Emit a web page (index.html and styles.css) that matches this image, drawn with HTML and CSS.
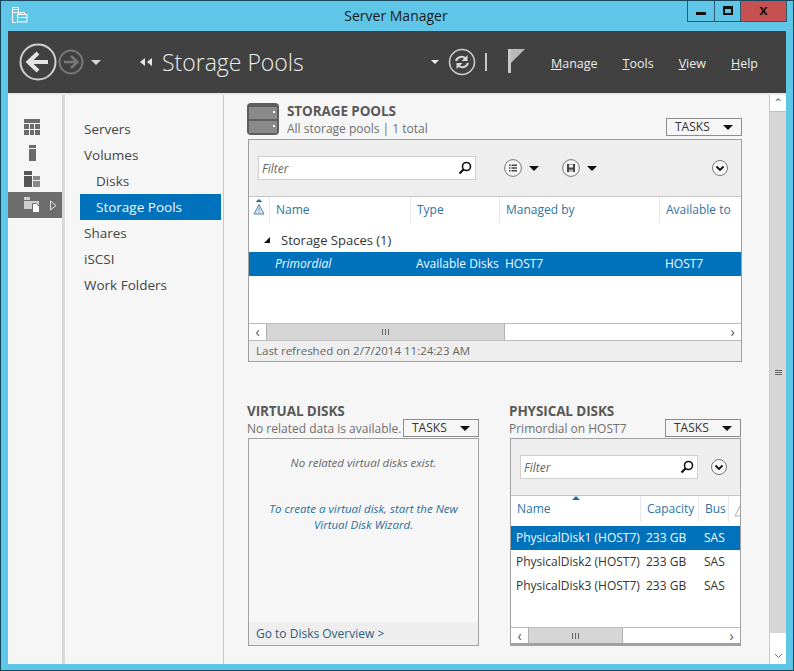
FILE: index.html
```html
<!DOCTYPE html>
<html lang="en">
<head>
<meta charset="utf-8">
<title>Server Manager</title>
<link rel="stylesheet" href="styles.css">
</head>
<body>
<div class="window">
  <div class="titlebar">
    <div class="app-icon">
      <svg width="17" height="17" viewBox="0 0 17 17"><path d="M1.5 1.5h6v5h-6zM1.5 6.5h6v4M1.5 6.500v10h4" fill="none" stroke="#fff"/><path d="M1 3.500h7" stroke="#fff"/><rect x="6.500" y="8.500" width="9.500" height="7.500" fill="#5fc6e8" stroke="#fff"/><path d="M9 8.500v-2h4.500v2M6.500 11.500h9.500" fill="none" stroke="#fff"/></svg>
    </div>
    <div class="title">Server Manager</div>
    <div class="winbtns">
      <div class="winbtn min"><span class="min-glyph"></span></div>
      <div class="winbtn max"><span class="max-glyph"></span></div>
      <div class="winbtn close">x</div>
    </div>
  </div>
  <div class="header">
    <svg class="back" width="38" height="38" viewBox="0 0 38 38"><circle cx="19" cy="19" r="17.500" fill="none" stroke="#d0d0d0" stroke-width="2"/><path d="M9 19h20M19 10l-9.500 9 9.500 9" fill="none" stroke="#e4e4e4" stroke-width="4"/></svg>
    <svg class="fwd" width="26" height="26" viewBox="0 0 26 26"><circle cx="13" cy="13" r="11.500" fill="none" stroke="#777" stroke-width="2"/><path d="M20 13H6M13 7l6.500 6-6.500 6" fill="none" stroke="#777" stroke-width="2.500"/></svg>
    <span class="caret hdr-caret1"></span>
    <span class="crumb-arrows"><i></i><i></i></span>
    <span class="crumb">Storage Pools</span>
    <span class="caret hdr-caret2"></span>
    <svg class="refresh" width="28" height="28" viewBox="0 0 28 28"><circle cx="14" cy="14" r="12.500" fill="none" stroke="#d0d0d0" stroke-width="1.500"/><path d="M8 13c1-4 7-6 10-2M20 15c-1 4-7 6-10 2" fill="none" stroke="#d8d8d8" stroke-width="2"/><path d="M19.500 7v6h-6zM8.500 21v-6h6z" fill="#d8d8d8"/></svg>
    <span class="hdr-sep"></span>
    <svg class="flag" width="18" height="24" viewBox="0 0 18 24"><rect x="0" y="0" width="3" height="24" fill="#c8c8c8"/><path d="M3 0h14L3 14z" fill="#b8b8b8"/></svg>
    <nav class="menu">
      <span class="menu-item"><u>M</u>anage</span>
      <span class="menu-item"><u>T</u>ools</span>
      <span class="menu-item"><u>V</u>iew</span>
      <span class="menu-item"><u>H</u>elp</span>
    </nav>
  </div>
  <div class="content">
    <div class="rail">
      <div class="rail-item">
        <svg width="16" height="16" viewBox="0 0 16 16"><path fill="#6b6b6b" d="M0 0h16v4H0zM0 5h5v5H0zM6 5h4v5H6zM11 5h5v5h-5zM0 11h5v5H0zM6 11h4v5H6zM11 11h5v5h-5z"/></svg>
      </div>
      <div class="rail-item">
        <svg width="16" height="16" viewBox="0 0 16 16"><path fill="#6b6b6b" d="M5 0h7v3H5zM5 4h7v12H5z"/></svg>
      </div>
      <div class="rail-item">
        <svg width="16" height="16" viewBox="0 0 16 16"><path fill="#555" d="M0 0h8v4H0zM0 5h8v11H0z"/><path fill="#888" d="M9 5h7v4H9zM9 10h7v6H9z"/></svg>
      </div>
      <div class="rail-item active">
        <svg width="17" height="16" viewBox="0 0 17 16"><path fill="#cfcfcf" d="M0 0h6v3H0zM0 4h15v8H0z"/><path fill="#fff" stroke="#6d6d6d" d="M8.500 6.500h4l3 3v6h-7z"/></svg>
        <svg class="rail-arrow" width="7" height="11" viewBox="0 0 7 11"><path d="M.5 1v9l5.500-4.500z" fill="none" stroke="#e8e8e8"/></svg>
      </div>
    </div>
    <div class="nav">
      <div class="nav-item">Servers</div>
      <div class="nav-item">Volumes</div>
      <div class="nav-item sub">Disks</div>
      <div class="nav-item sub selected">Storage Pools</div>
      <div class="nav-item">Shares</div>
      <div class="nav-item">iSCSI</div>
      <div class="nav-item">Work Folders</div>
    </div>
    <main class="main">
      <section class="pools">
        <div class="pools-head">
          <svg class="pools-icon" width="32" height="32" viewBox="0 0 32 32"><rect width="32" height="32" rx="4" fill="#5e5e5e"/><rect x="2" y="4" width="28" height="12" fill="#8a8a8a"/><rect x="2" y="18" width="28" height="12" fill="#8a8a8a"/><rect x="26" y="8" width="2" height="2" fill="#fff"/><rect x="26" y="22" width="2" height="2" fill="#fff"/></svg>
          <div class="head-text">
            <div class="sec-title">STORAGE POOLS</div>
            <div class="sec-sub">All storage pools | 1 total</div>
          </div>
          <div class="tasks">TASKS<span class="caret-dark"></span></div>
        </div>
        <div class="panel pools-panel">
          <div class="toolbar">
            <div class="filter filter-wide"><span>Filter</span>
              <svg width="14" height="14" viewBox="0 0 14 14"><circle cx="8.500" cy="5.500" r="4" fill="none" stroke="#111" stroke-width="1.600"/><path d="M5.500 8.500L1.500 12.500" stroke="#111" stroke-width="2.200"/></svg>
            </div>
            <svg class="tool-first" width="18" height="18" viewBox="0 0 18 18"><circle cx="9" cy="9" r="8.400" fill="#f6f6f6" stroke="#777"/><path d="M5 5.500h1.500v1.500H5zM5 8.300h1.500v1.500H5zM5 11.100h1.500v1.500H5zM7.500 5.500H13v1.500H7.500zM7.500 8.300H13v1.500H7.500zM7.500 11.100H13v1.500H7.500z" fill="#444"/></svg>
            <span class="caret-dark tool-caret"></span>
            <svg class="tool-second" width="18" height="18" viewBox="0 0 18 18"><circle cx="9" cy="9" r="8.400" fill="#f6f6f6" stroke="#777"/><path d="M5 5h8v8H5z" fill="#444"/><path d="M7 5.500h4v3H7z" fill="#f6f6f6"/><path d="M7 10.500h4V13H7z" fill="#bbb"/></svg>
            <span class="caret-dark tool-caret"></span>
            <svg class="expand" width="16" height="16" viewBox="0 0 16 16"><circle cx="8" cy="8" r="7.500" fill="#f8f8f8" stroke="#777"/><path d="M4.500 6.500L8 10l3.500-3.500" fill="none" stroke="#111" stroke-width="1.800"/></svg>
          </div>
          <div class="thead pools-cols">
            <div class="th warn-col">
              <svg class="sort-warn" width="12" height="16" viewBox="0 0 12 16"><path d="M2.500 3L6 0l3.500 3z" fill="#1b6ea8"/><path d="M6 5.500L11 15H1z" fill="#dbe7f0" stroke="#4d87ad"/><path d="M6 8.500v3M6 12.500v1" stroke="#4d87ad"/></svg>
            </div>
            <div class="th">Name</div>
            <div class="th">Type</div>
            <div class="th">Managed by</div>
            <div class="th">Available to</div>
          </div>
          <div class="group"><span class="group-tri"></span>Storage Spaces (1)</div>
          <div class="row pools-cols selected">
            <div></div>
            <div class="cell"><em>Primordial</em></div>
            <div class="cell">Available Disks</div>
            <div class="cell">HOST7</div>
            <div class="cell">HOST7</div>
          </div>
          <div class="panel-fill"></div>
          <div class="hscroll">
            <div class="sb-btn">&#8249;</div>
            <div class="sb-thumb pools-thumb"><span class="grip"><i></i><i></i><i></i></span></div>
            <div class="sb-rest"></div>
            <div class="sb-btn">&#8250;</div>
          </div>
          <div class="panel-foot">Last refreshed on 2/7/2014 11:24:23 AM</div>
        </div>
      </section>
      <div class="lower">
        <section>
          <div class="low-head">
            <div class="head-text">
              <div class="sec-title">VIRTUAL DISKS</div>
              <div class="sec-sub">No related data is available.</div>
            </div>
            <div class="tasks">TASKS<span class="caret-dark"></span></div>
          </div>
          <div class="panel low-panel">
            <div class="empty">
              <div class="empty-note">No related virtual disks exist.</div>
              <div class="empty-link">To create a virtual disk, start the New Virtual Disk Wizard.</div>
            </div>
            <div class="panel-foot link-foot">Go to Disks Overview &gt;</div>
          </div>
        </section>
        <section>
          <div class="low-head">
            <div class="head-text">
              <div class="sec-title">PHYSICAL DISKS</div>
              <div class="sec-sub">Primordial on HOST7</div>
            </div>
            <div class="tasks">TASKS<span class="caret-dark"></span></div>
          </div>
          <div class="panel low-panel">
            <div class="toolbar toolbar-low">
              <div class="filter filter-narrow"><span>Filter</span>
                <svg width="14" height="14" viewBox="0 0 14 14"><circle cx="8.500" cy="5.500" r="4" fill="none" stroke="#111" stroke-width="1.600"/><path d="M5.500 8.500L1.500 12.500" stroke="#111" stroke-width="2.200"/></svg>
              </div>
              <svg class="expand" width="16" height="16" viewBox="0 0 16 16"><circle cx="8" cy="8" r="7.500" fill="#f8f8f8" stroke="#777"/><path d="M4.500 6.500L8 10l3.500-3.500" fill="none" stroke="#111" stroke-width="1.800"/></svg>
            </div>
            <div class="thead disk-cols">
              <div class="th name-sorted">Name</div>
              <div class="th">Capacity</div>
              <div class="th">Bus</div>
              <div class="th warn-end">
                <svg width="10" height="12" viewBox="0 0 10 12"><path d="M5 1l5 10" fill="none" stroke="#aaa"/><path d="M5 1L0 11h10" fill="none" stroke="#aaa"/></svg>
              </div>
            </div>
            <div class="row disk-cols selected"><div class="cell first">PhysicalDisk1 (HOST7)</div><div class="cell">233 GB</div><div class="cell">SAS</div></div>
            <div class="row disk-cols"><div class="cell first">PhysicalDisk2 (HOST7)</div><div class="cell">233 GB</div><div class="cell">SAS</div></div>
            <div class="row disk-cols"><div class="cell first">PhysicalDisk3 (HOST7)</div><div class="cell">233 GB</div><div class="cell">SAS</div></div>
            <div class="panel-fill"></div>
            <div class="hscroll hscroll-end">
              <div class="sb-btn">&#8249;</div>
              <div class="sb-thumb disk-thumb"><span class="grip"><i></i><i></i><i></i></span></div>
              <div class="sb-rest"></div>
              <div class="sb-btn">&#8250;</div>
            </div>
          </div>
        </section>
      </div>
    </main>
    <div class="vscroll">
      <div class="vbtn">&#8963;</div>
      <div class="vthumb"><span class="vgrip"><i></i><i></i><i></i></span></div>
      <div class="vrest"></div>
      <div class="vbtn vbtn-down"><svg width="9" height="6" viewBox="0 0 9 6"><path d="M1 1l3.500 3.500L8 1" fill="none" stroke="#777"/></svg></div>
    </div>
  </div>
</div>
</body>
</html>
```

FILE: styles.css
```css
* { box-sizing: border-box; }
html, body { margin: 0; padding: 0; }
body { width: 794px; height: 671px; overflow: hidden; font-family: "Open Sans", "Noto Sans", sans-serif; font-size: 12px; color: #444; }

.window { width: 794px; height: 671px; background: #5fc6e8; border: 1px solid #17475c; padding: 0 7px 6px 7px; display: flex; flex-direction: column; }

.titlebar { height: 30px; display: grid; grid-template-columns: 1fr auto 1fr; align-items: start; flex: none; }
.app-icon { padding: 5px 0 0 3px; line-height: 0; }
.title { font-size: 14px; line-height: 30px; color: #1a1a1a; margin-left: -2px; }
.winbtns { justify-self: end; display: flex; height: 21px; margin-right: -1px; border: 1px solid #2c5a70; border-top: 0; }
.winbtn { display: flex; align-items: center; justify-content: center; }
.min { width: 27px; border-right: 1px solid #2c5a70; }
.max { width: 26px; border-right: 1px solid #2c5a70; }
.close { width: 45px; background: #c75050; color: #111; font: bold 15px/20px "Liberation Sans", sans-serif; padding-bottom: 3px; }
.min-glyph { width: 10px; height: 3px; background: #111; margin-top: 5px; }
.max-glyph { width: 10px; height: 9px; border: 2px solid #111; border-top-width: 3px; margin-bottom: 2px; }

.header { height: 62px; background: #414141; display: flex; align-items: center; flex: none; color: #e6e6e6; }
.back { margin-left: 11px; flex: none; }
.fwd { margin-left: 1px; flex: none; }
.caret { width: 0; height: 0; border-left: 5px solid transparent; border-right: 5px solid transparent; border-top: 5px solid #d8d8d8; flex: none; }
.hdr-caret1 { margin-left: 7px; }
.crumb-arrows { display: flex; margin-left: 39px; gap: 2px; flex: none; }
.crumb-arrows i { width: 0; height: 0; border-top: 4px solid transparent; border-bottom: 4px solid transparent; border-right: 5px solid #e6e6e6; }
.crumb { margin-left: 10px; font-size: 23px; font-weight: 300; line-height: 30px; color: #ececec; white-space: nowrap; }
.hdr-caret2 { margin-left: auto; border-left-width: 4px; border-right-width: 4px; border-top-width: 4px; border-top-color: #eee; }
.refresh { margin-left: 9px; flex: none; }
.hdr-sep { width: 2px; height: 18px; background: #c8c8c8; margin-left: 9px; flex: none; }
.flag { margin-left: 21px; flex: none; margin-top: -3px; }
.menu { display: flex; margin-left: 25px; font-size: 12.500px; color: #ececec; margin-right: 28px; margin-top: 2px; }
.menu-item { margin-right: 25px; }
.menu-item:last-child { margin-right: 0; }

.content { flex: 1; min-height: 0; display: flex; background: #f6f6f6; border-top: 2px solid #e9e9e9; }
.rail { width: 54px; padding-top: 19px; flex: none; }
.rail-item { height: 26px; display: flex; align-items: center; padding-left: 16px; position: relative; }
.rail-item.active { background: #6d6d6d; }
.rail-arrow { margin-left: 9px; }
.nav { width: 162px; border-left: 3px solid #d8d8d8; border-right: 1px solid #c8c8c8; padding: 21px 2px 0 15px; font-size: 13.500px; color: #444; flex: none; }
.nav-item { height: 26px; line-height: 26px; padding-left: 4px; }
.nav-item.sub { padding-left: 16px; }
.nav-item.selected { background: #0072bc; color: #f0f8ff; }

.main { flex: 1; min-width: 0; padding: 5px 27px 0 23px; display: flex; flex-direction: column; }
.pools-head { height: 39px; display: flex; align-items: flex-start; }
.pools-icon { margin-top: 3px; flex: none; }
.pools-head .head-text { margin-left: 8px; }
.pools-head .tasks { margin-left: auto; margin-top: 18px; }
.sec-title { font-size: 13.500px; font-weight: 700; color: #595959; line-height: 18px; letter-spacing: -.1px; }
.sec-sub { font-size: 12px; color: #6f6f6f; line-height: 18px; white-space: nowrap; }
.pools-head .sec-title { margin-top: 2px; }
.tasks { width: 76px; height: 18px; border: 1px solid #8c8c8c; font-size: 12px; line-height: 16px; color: #333; padding-left: 8px; display: flex; align-items: center; justify-content: space-between; padding-right: 8px; flex: none; }
.caret-dark { width: 0; height: 0; border-left: 5px solid transparent; border-right: 5px solid transparent; border-top: 5px solid #111; flex: none; }

.panel { border: 1px solid #a0a0a0; border-right-color: #a0a0a0; background: #fff; margin-left: 1px; display: flex; flex-direction: column; }
.pools-panel { height: 223px; }
.toolbar { height: 57px; background: #eee; display: flex; align-items: center; padding-left: 9px; border-bottom: 1px solid #c4c4c4; flex: none; }
.filter { height: 24px; background: #fff; border: 1px solid #d0d0d0; display: flex; align-items: center; justify-content: space-between; padding: 0 3px; font-style: italic; color: #666; font-size: 12px; flex: none; }
.filter-wide { width: 218px; }
.filter-narrow { width: 178px; }
.tool-first { margin-left: 28px; }
.tool-second { margin-left: 23px; }
.tool-caret { margin-left: 7px; }
.expand { margin-left: auto; margin-right: 13px; }
.toolbar-low .expand { margin-right: 13px; }

.thead { height: 30px; flex: none; background: #fff; }
.pools-cols { display: grid; grid-template-columns: 20px 141px 89px 160px 1fr; }
.disk-cols { display: grid; grid-template-columns: 129px 58px 30px 1fr; }
.th { color: #2e75a3; font-size: 12px; line-height: 25px; padding-left: 6px; border-left: 1px solid #e8e8e8; height: 26px; white-space: nowrap; overflow: hidden; }
.th:first-child { border-left: 0; }
.warn-col { padding-left: 4px; line-height: 0; }
.sort-warn { margin-top: 2px; }
.name-sorted { position: relative; }
.name-sorted::after { content: ""; position: absolute; left: 61px; top: 0; width: 0; height: 0; border-left: 4px solid transparent; border-right: 4px solid transparent; border-bottom: 4px solid #1b6ea8; }
.warn-end { padding-left: 6px; line-height: 0; padding-top: 9px; }
.group { height: 25px; line-height: 24px; color: #333; font-size: 13px; padding-left: 15px; display: flex; align-items: center; flex: none; }
.group-tri { width: 0; height: 0; border-left: 6px solid transparent; border-bottom: 6px solid #111; margin-right: 11px; }
.row { height: 24px; line-height: 24px; font-size: 12px; color: #333; flex: none; white-space: nowrap; }
.row.selected { background: #0072bc; color: #f4faff; }
.cell { padding-left: 6px; overflow: visible; }
.cell.first { padding-left: 5px; }
.panel-fill { flex: 1; }

.hscroll { height: 18px; display: flex; border-top: 1px solid #bcbcbc; border-bottom: 1px solid #bcbcbc; flex: none; background: #fff; }
.hscroll-end { border-bottom: 2px solid #a0a0a0; }
.sb-btn { width: 17px; text-align: center; font-size: 14px; line-height: 15px; color: #555; flex: none; }
.sb-thumb { background: #d6d6d6; border-left: 1px solid #b0b0b0; border-right: 1px solid #b0b0b0; display: flex; align-items: center; justify-content: center; flex: none; }
.pools-thumb { width: 239px; }
.disk-thumb { width: 95px; }
.sb-rest { flex: 1; }
.grip { display: flex; gap: 1px; }
.grip i { width: 1px; height: 6px; background: #666; margin-right: 1px; }
.panel-foot { height: 20px; background: #eee; color: #666; font-size: 11.500px; line-height: 20px; padding-left: 7px; flex: none; }

.lower { margin-top: 40px; display: grid; grid-template-columns: 232px 232px; column-gap: 30px; }
.low-head { height: 36px; display: flex; justify-content: space-between; align-items: flex-end; }
.low-head .tasks { margin-bottom: 1px; }
.low-panel { height: 208px; }
.empty { flex: 1; background: #f6f6f6; padding-top: 16px; text-align: center; font-style: italic; font-size: 11.500px; }
.empty-note { color: #666; line-height: 16px; }
.empty-link { color: #2a6f9c; line-height: 16px; margin: 30px auto 0; width: 205px; }
.link-foot { color: #2c5f7c; font-size: 12px; height: 23px; line-height: 24px; }
.toolbar-low { padding-left: 9px; }

.vscroll { width: 17px; border-left: 1px solid #c8c8c8; display: flex; flex-direction: column; background: #fff; flex: none; }
.vbtn { height: 16px; text-align: center; color: #777; font-size: 12px; line-height: 16px; flex: none; }
.vbtn-down { line-height: 14px; }
.vthumb { height: 522px; background: #d6d6d6; border-top: 1px solid #c0c0c0; display: flex; align-items: center; justify-content: center; flex: none; }
.vgrip { display: flex; flex-direction: column; gap: 1px; }
.vgrip i { width: 7px; height: 1px; background: #666; }
.vrest { flex: 1; }
```
